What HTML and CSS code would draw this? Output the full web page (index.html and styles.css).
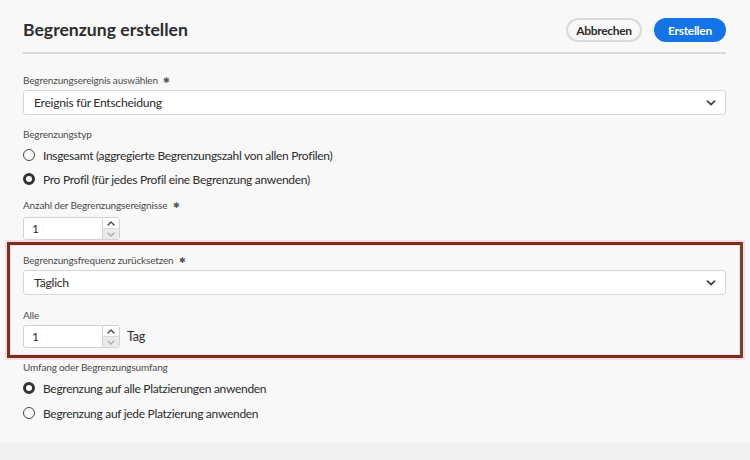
FILE: index.html
```html
<!DOCTYPE html>
<html lang="de">
<head>
<meta charset="utf-8">
<title>Begrenzung erstellen</title>
<link rel="stylesheet" href="styles.css">
</head>
<body>
<div class="page">
  <header class="header">
    <h1 class="title">Begrenzung erstellen</h1>
    <div class="actions">
      <button class="btn btn-secondary">Abbrechen</button>
      <button class="btn btn-primary">Erstellen</button>
    </div>
  </header>
  <div class="divider"></div>

  <div class="field first">
    <div class="label">Begrenzungsereignis auswählen <span class="req">✱</span></div>
    <div class="select">
      <span>Ereignis für Entscheidung</span>
      <svg class="chev" width="10" height="6" viewBox="0 0 10 6"><path d="M1.5 1.2 L5 4.6 L8.5 1.2" fill="none" stroke="#444" stroke-width="1.8" stroke-linecap="round" stroke-linejoin="round"/></svg>
    </div>
  </div>

  <div class="field type">
    <div class="label">Begrenzungstyp</div>
    <div class="radios">
      <div class="radio"><span class="dot"></span><span>Insgesamt (aggregierte Begrenzungszahl von allen Profilen)</span></div>
      <div class="radio"><span class="dot on"></span><span>Pro Profil (für jedes Profil eine Begrenzung anwenden)</span></div>
    </div>
  </div>

  <div class="field count">
    <div class="label">Anzahl der Begrenzungsereignisse <span class="req">✱</span></div>
    <div class="number-row">
      <div class="number">
        <span class="num-val">1</span>
        <div class="stepper">
          <span class="step up"><svg width="8" height="5" viewBox="0 0 8 5"><path d="M1 4 L4 1 L7 4" fill="none" stroke="#444" stroke-width="1.4" stroke-linecap="round" stroke-linejoin="round"/></svg></span>
          <span class="step down"><svg width="8" height="5" viewBox="0 0 8 5"><path d="M1 1 L4 4 L7 1" fill="none" stroke="#aaa" stroke-width="1.2" stroke-linecap="round" stroke-linejoin="round"/></svg></span>
        </div>
      </div>
    </div>
  </div>

  <section class="highlight">
    <div class="label">Begrenzungsfrequenz zurücksetzen <span class="req">✱</span></div>
    <div class="select">
      <span>Täglich</span>
      <svg class="chev" width="10" height="6" viewBox="0 0 10 6"><path d="M1.5 1.2 L5 4.6 L8.5 1.2" fill="none" stroke="#444" stroke-width="1.8" stroke-linecap="round" stroke-linejoin="round"/></svg>
    </div>
    <div class="label alle">Alle</div>
    <div class="number-row">
      <div class="number">
        <span class="num-val">1</span>
        <div class="stepper">
          <span class="step up"><svg width="8" height="5" viewBox="0 0 8 5"><path d="M1 4 L4 1 L7 4" fill="none" stroke="#444" stroke-width="1.4" stroke-linecap="round" stroke-linejoin="round"/></svg></span>
          <span class="step down"><svg width="8" height="5" viewBox="0 0 8 5"><path d="M1 1 L4 4 L7 1" fill="none" stroke="#aaa" stroke-width="1.2" stroke-linecap="round" stroke-linejoin="round"/></svg></span>
        </div>
      </div>
      <span class="unit">Tag</span>
    </div>
  </section>

  <div class="field scope">
    <div class="label">Umfang oder Begrenzungsumfang</div>
    <div class="radios">
      <div class="radio"><span class="dot on"></span><span>Begrenzung auf alle Platzierungen anwenden</span></div>
      <div class="radio"><span class="dot"></span><span>Begrenzung auf jede Platzierung anwenden</span></div>
    </div>
  </div>
</div>
</body>
</html>
```

FILE: styles.css
```css
* { box-sizing: border-box; }
html, body { margin: 0; padding: 0; }
body {
  background: #f1f1f1;
  font-family: "Lato", "Noto Sans", sans-serif;
  color: #2c2c2c;
}
.page {
  height: 442px;
  background: #f8f8f8;
  padding: 17px 24px 0 23px;
}
.header {
  display: flex;
  align-items: center;
  justify-content: space-between;
  height: 26px;
}
.title {
  margin: 0;
  font-size: 17.6px;
  font-weight: 700;
  color: #2c2c2c;
  line-height: 26px;
}
.actions { display: flex; gap: 12px; }
.btn {
  height: 24px;
  border-radius: 12px;
  font-family: inherit;
  font-size: 12px;
  font-weight: 700;
  letter-spacing: -0.3px;
  padding: 0;
  cursor: pointer;
}
.btn-secondary {
  width: 76px;
  background: #f8f8f8;
  border: 2px solid #dadada;
  color: #2c2c2c;
}
.btn-primary {
  width: 72px;
  background: #1473e6;
  border: none;
  color: #fff;
}
.divider {
  height: 2px;
  background: #d9d9d9;
  margin-top: 9px;
}
.label {
  font-size: 10px;
  letter-spacing: -0.15px;
  line-height: 14px;
  color: #4b4b4b;
}
.req { font-size: 8px; color: #555; margin-left: 3px; vertical-align: 1px; }
.field.first { margin-top: 19px; }
.select {
  margin-top: 3px;
  height: 25px;
  background: #fff;
  border: 1px solid #d7d7d7;
  border-radius: 3px;
  display: flex;
  align-items: center;
  justify-content: space-between;
  padding: 0 9px 0 10px;
  font-size: 12.2px;
  letter-spacing: -0.3px;
  color: #2c2c2c;
}
.field.type { margin-top: 12px; }
.radios { display: flex; flex-direction: column; gap: 4px; margin-top: 4px; }
.radio {
  display: flex;
  align-items: center;
  height: 20px;
  font-size: 12px;
  letter-spacing: -0.3px;
  color: #2c2c2c;
}
.dot {
  width: 12px;
  height: 12px;
  border-radius: 50%;
  border: 1.6px solid #4a4a4a;
  margin-right: 8px;
  flex: none;
}
.dot.on { border: 3.6px solid #333; background: #fff; }
.field.count { margin-top: 9px; }
.number-row {
  display: flex;
  align-items: center;
  margin-top: 5px;
}
.number {
  width: 97px;
  height: 23px;
  background: #fff;
  border: 1px solid #d2d2d2;
  border-radius: 3px;
  display: flex;
}
.num-val {
  flex: 1;
  font-size: 12px;
  line-height: 21px;
  padding-left: 8px;
}
.stepper {
  width: 17px;
  border-left: 1px solid #d2d2d2;
  display: flex;
  flex-direction: column;
}
.step {
  flex: 1;
  display: flex;
  align-items: center;
  justify-content: center;
}
.step.up { background: #fff; }
.step.down { background: #ebebeb; border-top: 1px solid #dadada; }
.unit { font-size: 12.5px; margin-left: 7px; color: #2c2c2c; letter-spacing: -0.2px; }
.highlight {
  margin: 2px -17px 0 -16px;
  padding: 8px 14px 7px 13px;
  border: 3px solid #7c2e17;
  border-right-color: #6e4620;
  box-shadow: 0 0 0 2px #f9dbe9, inset 0 0 0 1px #f6dce6;
}
.highlight .number-row { margin-top: 3px; }
.label.alle { margin-top: 13px; }
.field.scope { margin-top: 2px; }
.field.scope .radios { gap: 5px; }
```
